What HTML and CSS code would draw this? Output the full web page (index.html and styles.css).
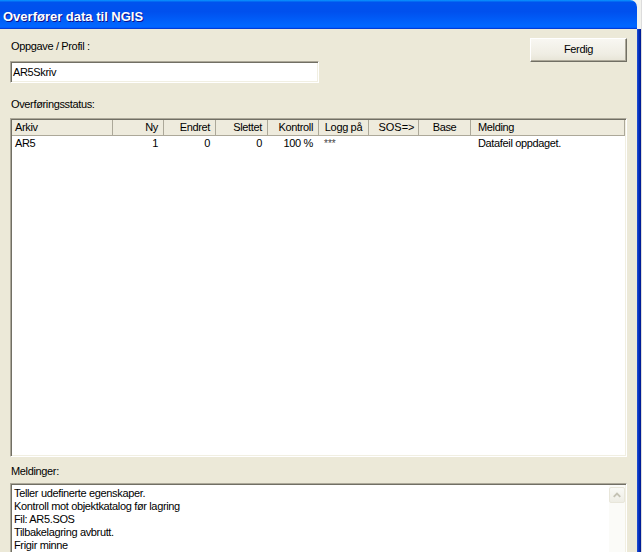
FILE: index.html
```html
<!DOCTYPE html>
<html lang="no">
<head>
<meta charset="utf-8">
<title>Overfører data til NGIS</title>
<link rel="stylesheet" href="styles.css">
</head>
<body>
<div class="screen">
  <div class="window">
    <div class="titlebar">Overfører data til NGIS</div>
    <div class="content">
      <div class="top">
        <div class="profile">
          <div class="label">Oppgave / Profil :</div>
          <div class="input">AR5Skriv</div>
        </div>
        <div class="button">Ferdig</div>
      </div>

      <div class="label status-label">Overføringsstatus:</div>
      <div class="list">
        <div class="cols head">
          <div class="hc left">Arkiv</div>
          <div class="hc right">Ny</div>
          <div class="hc right">Endret</div>
          <div class="hc right">Slettet</div>
          <div class="hc right">Kontroll</div>
          <div class="hc center">Logg på</div>
          <div class="hc center sos">SOS=&gt;</div>
          <div class="hc center">Base</div>
          <div class="hc melding">Melding</div>
        </div>
        <div class="cols row">
          <div class="rc left">AR5</div>
          <div class="rc right">1</div>
          <div class="rc right">0</div>
          <div class="rc right">0</div>
          <div class="rc right">100 %</div>
          <div class="rc left"><span class="stars">***</span></div>
          <div class="rc"></div>
          <div class="rc"></div>
          <div class="rc melding">Datafeil oppdaget.</div>
        </div>
      </div>

      <div class="label msg-label">Meldinger:</div>
      <div class="memo">
        <div class="memo-text">
          <div>Teller udefinerte egenskaper.</div>
          <div>Kontroll mot objektkatalog før lagring</div>
          <div>Fil: AR5.SOS</div>
          <div>Tilbakelagring avbrutt.</div>
          <div>Frigir minne</div>
        </div>
        <div class="scroll">
          <div class="scroll-up">
            <svg width="15" height="15" viewBox="0 0 15 15"><polyline points="4,9 7.5,5.5 11,9" fill="none" stroke="#C4C2B4" stroke-width="2"/></svg>
          </div>
        </div>
      </div>
    </div>
  </div>
  <div class="frame"></div>
  <div class="edge"></div>
</div>
</body>
</html>
```

FILE: styles.css
```css
html, body {
  margin: 0;
  padding: 0;
}
body {
  width: 642px;
  height: 552px;
  overflow: hidden;
  background: #F2F2EE;
  font-family: "Liberation Sans", Arial, sans-serif;
  font-size: 11px;
  letter-spacing: -0.35px;
  color: #000;
}
.screen {
  display: flex;
  height: 552px;
}
.window {
  width: 637px;
  display: flex;
  flex-direction: column;
  flex: none;
}
.titlebar {
  height: 29px;
  box-sizing: border-box;
  padding: 4px 0 0 3px;
  line-height: 25px;
  border-top-right-radius: 7px;
  background: linear-gradient(180deg, #0997ff, #0053ee 8%, #0050ee 40%, #0066ff 88%, #0066ff 93%, #005bff 95%, #003dd7 96%, #003dd7);
  color: #fff;
  font-weight: bold;
  font-size: 13px;
  letter-spacing: 0;
  text-shadow: 1px 1px #0f1089;
  white-space: nowrap;
}
.frame {
  width: 4px;
  flex: none;
  margin-top: 29px;
  background: linear-gradient(90deg, #2453D0, #0A36C6 35%, #0024A6 70%, #00188E);
}
.edge {
  width: 1px;
  flex: none;
  background: #DCDCDC;
}
.content {
  flex: 1;
  background: #ECE9D8;
  padding: 11px 10px 0 10px;
  overflow: hidden;
}
.label {
  line-height: 13px;
  padding-left: 1px;
  white-space: nowrap;
}
.top {
  display: flex;
  justify-content: space-between;
  align-items: flex-start;
}
.input {
  margin-top: 8px;
  width: 309px;
  height: 22px;
  box-sizing: border-box;
  background: #fff;
  border: 1px solid;
  border-color: #ACA899 #fff #fff #ACA899;
  box-shadow: inset 1px 1px #716F64, inset -1px -1px #F1EFE2;
  padding-left: 2px;
  line-height: 20px;
}
.button {
  margin-top: -2px;
  width: 97px;
  height: 24px;
  box-sizing: border-box;
  border: 1px solid;
  border-color: #FFFFFF #716F64 #716F64 #FFFFFF;
  box-shadow: inset -1px -1px #ACA899;
  background: linear-gradient(180deg, #F8F7F2, #EFEDE3 70%, #E7E4D6);
  text-align: center;
  line-height: 21px;
}
.status-label {
  margin-top: 15px;
}
.list {
  margin-top: 7px;
  height: 339px;
  box-sizing: border-box;
  background: #fff;
  border: 1px solid;
  border-color: #ACA899 #fff #fff #ACA899;
  box-shadow: inset 1px 1px #716F64, inset -1px -1px #F1EFE2;
  padding: 1px;
}
.cols {
  display: grid;
  grid-template-columns: 101px 51px 52px 52px 51px 50px 50px 52px 154px;
}
.head {
  height: 16px;
  box-sizing: border-box;
  background: #EEEBDD;
  border-bottom: 1px solid #ACA899;
}
.hc {
  line-height: 15px;
  border-right: 1px solid #ACA899;
  padding: 0 5px 0 3px;
  white-space: nowrap;
  overflow: hidden;
}
.row {
  height: 15px;
}
.rc {
  line-height: 15px;
  padding: 0 6px 0 3px;
  white-space: nowrap;
}
.left { text-align: left; }
.right { text-align: right; }
.center { text-align: center; padding-left: 3px; padding-right: 3px; }
.hc.sos { padding-left: 9px; letter-spacing: 0; }
.melding { padding-left: 7px; }
.stars {
  font-size: 10px;
  color: #444;
  vertical-align: 3px;
  letter-spacing: 0;
  padding-left: 2px;
}
.msg-label {
  margin-top: 8px;
}
.memo {
  margin-top: 5px;
  height: 100px;
  box-sizing: border-box;
  background: #fff;
  border: 1px solid;
  border-color: #ACA899 #fff #fff #ACA899;
  box-shadow: inset 1px 1px #716F64, inset -1px -1px #F1EFE2;
  padding: 1px;
  display: flex;
}
.memo-text {
  flex: 1;
  padding: 2px 2px 0 2px;
  line-height: 13px;
  white-space: nowrap;
}
.scroll {
  width: 16px;
  flex: none;
  background: #FBFBF8;
  padding-top: 2px;
  box-sizing: border-box;
}
.scroll-up {
  width: 16px;
  height: 16px;
  box-sizing: border-box;
  border: 1px solid #E8E6DA;
  border-radius: 2px;
  background: linear-gradient(180deg, #F9F9F5, #EEEDE5);
  display: flex;
  align-items: center;
  justify-content: center;
}
.scroll-up svg {
  display: block;
}
```
